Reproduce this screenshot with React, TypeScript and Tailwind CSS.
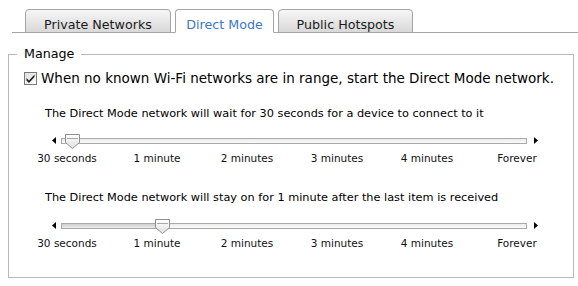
import React from 'react';

const labels = ['30 seconds', '1 minute', '2 minutes', '3 minutes', '4 minutes', 'Forever'];

function Thumb() {
  return (
    <svg width="15" height="15" viewBox="0 0 15 15" className="block">
      <defs>
        <linearGradient id="thumbFill" x1="0" y1="0" x2="0" y2="1">
          <stop offset="0" stopColor="#ffffff" />
          <stop offset="1" stopColor="#dedede" />
        </linearGradient>
      </defs>
      <path d="M0.5 0.5 H14.5 V8.5 L7.5 14.5 L0.5 8.5 Z" fill="url(#thumbFill)" stroke="#8f8f8f" />
      <line x1="2" y1="4.5" x2="13" y2="4.5" stroke="#a8a8a8" />
    </svg>
  );
}

function Slider({ value }: { value: number }) {
  // thumb center = 70 + value * 90 (page x), track starts at 61
  const thumbLeft = 2 + value * 90;
  return (
    <div className="relative h-[16px] w-[500px] ml-[43px] flex items-start">
      <svg width="4" height="7" viewBox="0 0 4 7" className="mt-[3px] mr-[5px]">
        <path d="M4 0 V7 L0 3.5 Z" fill="#000" />
      </svg>
      <div className="relative mt-[4px] h-[6px] w-[466px] border border-[#a9a9a9] bg-gradient-to-b from-[#ececec] to-[#fbfbfb]">
        {value > 0 && (
          <div
            className="absolute left-0 top-0 h-full bg-gradient-to-b from-[#cfcfcf] to-[#ebebeb]"
            style={{ width: thumbLeft + 6 }}
          />
        )}
      </div>
      <svg width="4" height="7" viewBox="0 0 4 7" className="mt-[3px] ml-[7px]">
        <path d="M0 0 V7 L4 3.5 Z" fill="#000" />
      </svg>
      <div className="absolute top-0" style={{ left: 11 + thumbLeft }}>
        <Thumb />
      </div>
    </div>
  );
}

function Labels() {
  return (
    <div className="grid grid-cols-6 w-[540px] ml-[13px] h-[14px] text-[10.5px] leading-[14px] text-[#111] mt-[1px]">
      {labels.map((l) => (
        <div key={l} className="text-center whitespace-nowrap">{l}</div>
      ))}
    </div>
  );
}

function Tab({ label, active }: { label: string; active?: boolean }) {
  return (
    <div
      className={`h-[24px] -mb-px flex items-center justify-center pt-[7px] rounded-t-[4px] border border-[#a4a4a4] text-[12.7px] leading-[16px] ${
        active
          ? 'bg-white border-b-white text-[#3a78c8]'
          : 'bg-gradient-to-b from-[#f6f6f6] to-[#d9d9d9] text-[#1a1a1a]'
      }`}
    >
      {label}
    </div>
  );
}

export default function App() {
  return (
    <div className="w-[578px] h-[286px] bg-white font-['DejaVu_Sans',sans-serif] text-black overflow-hidden">
      <div className="pt-[9px] pl-[12px]">
        <div className="flex h-[24px] border-b border-[#a4a4a4] pl-[13px] gap-[4px]">
          <div className="w-[146px]"><Tab label="Private Networks" /></div>
          <div className="w-[99px]"><Tab label="Direct Mode" active /></div>
          <div className="w-[135px]"><Tab label="Public Hotspots" /></div>
        </div>
      </div>
      <fieldset className="ml-[8px] mt-[13px] w-[566px] h-[232px] border border-[#b8b8b8] px-0">
        <legend className="ml-[8px] px-[7px] text-[12.7px] leading-[16px]">Manage</legend>
        <div className="mt-[8px] h-[16px] flex items-center pl-[15px]">
          <svg width="13" height="13" viewBox="0 0 13 13" className="shrink-0">
            <defs>
              <linearGradient id="cbFill" x1="0" y1="0" x2="1" y2="1">
                <stop offset="0" stopColor="#dcdcdc" />
                <stop offset="1" stopColor="#ffffff" />
              </linearGradient>
            </defs>
            <rect x="0.5" y="0.5" width="12" height="12" fill="url(#cbFill)" stroke="#7a7a7a" />
            <path d="M2.5 6 L5 8.5 L10.5 2.5 V5 L5 11 L2.5 8.5 Z" fill="#222" />
          </svg>
          <span className="ml-[4px] text-[13.5px] leading-[16px] whitespace-nowrap">
            When no known Wi-Fi networks are in range, start the Direct Mode network.
          </span>
        </div>
        <div className="mt-[20px] h-[16px] pl-[36px] text-[11.3px] leading-[16px] whitespace-nowrap">
          The Direct Mode network will wait for 30 seconds for a device to connect to it
        </div>
        <div className="mt-[12px]">
          <Slider value={0} />
        </div>
        <Labels />
        <div className="mt-[25px] h-[16px] pl-[36px] text-[11.3px] leading-[16px] whitespace-nowrap">
          The Direct Mode network will stay on for 1 minute after the last item is received
        </div>
        <div className="mt-[13px]">
          <Slider value={1} />
        </div>
        <Labels />
      </fieldset>
    </div>
  );
}
